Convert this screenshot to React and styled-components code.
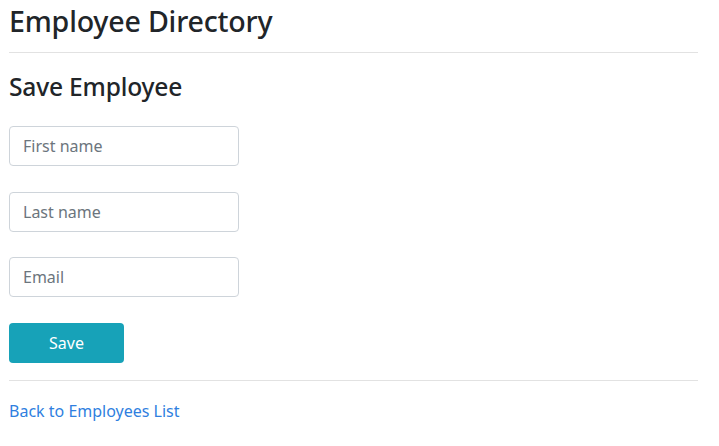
import React from 'react';
import styled, { createGlobalStyle } from 'styled-components';

const GlobalStyle = createGlobalStyle`
  body {
    margin: 0;
    background: #fff;
    font-family: "Noto Sans", "Open Sans", sans-serif;
    color: #212529;
  }
`;

const Page = styled.div`
  width: 689px;
  padding: 0 9px;
`;

const Title = styled.h1`
  margin: 0;
  padding-top: 3px;
  height: 36px;
  font-size: 28.6px;
  line-height: 36px;
  font-weight: 500;
  letter-spacing: -0.2px;
`;

const Rule = styled.hr`
  margin: ${({ $top }) => $top}px 0 0 0;
  border: 0;
  border-top: 1px solid #e2e2e2;
`;

const Heading = styled.h2`
  margin: 18px 0 0 0;
  font-size: 24.6px;
  line-height: 32px;
  font-weight: 500;
  letter-spacing: -0.2px;
`;

const Form = styled.form`
  display: flex;
  flex-direction: column;
  align-items: flex-start;
  gap: 25.6px;
  margin-top: 23px;
`;

const Input = styled.input`
  box-sizing: border-box;
  width: 230px;
  height: 40px;
  padding: 0 13px;
  border: 1px solid #ced4da;
  border-radius: 4px;
  font-family: inherit;
  font-size: 16px;
  color: #495057;
  outline: none;

  &::placeholder {
    color: #6c757d;
  }
`;

const Button = styled.button`
  width: 115px;
  height: 40px;
  border: 0;
  border-radius: 4px;
  background: #17a2b8;
  color: #fff;
  font-family: inherit;
  font-size: 16px;
  cursor: pointer;
`;

const Link = styled.a`
  display: block;
  margin-top: 19px;
  font-size: 16px;
  line-height: 22px;
  color: #2f7fe0;
  text-decoration: none;
`;

export default function App() {
  return (
    <Page>
      <GlobalStyle />
      <Title>Employee Directory</Title>
      <Rule $top={13} />
      <Heading>Save Employee</Heading>
      <Form onSubmit={e => e.preventDefault()}>
        <Input placeholder="First name" />
        <Input placeholder="Last name" />
        <Input placeholder="Email" />
        <Button type="submit">Save</Button>
      </Form>
      <Rule $top={17} />
      <Link href="#">Back to Employees List</Link>
    </Page>
  );
}
